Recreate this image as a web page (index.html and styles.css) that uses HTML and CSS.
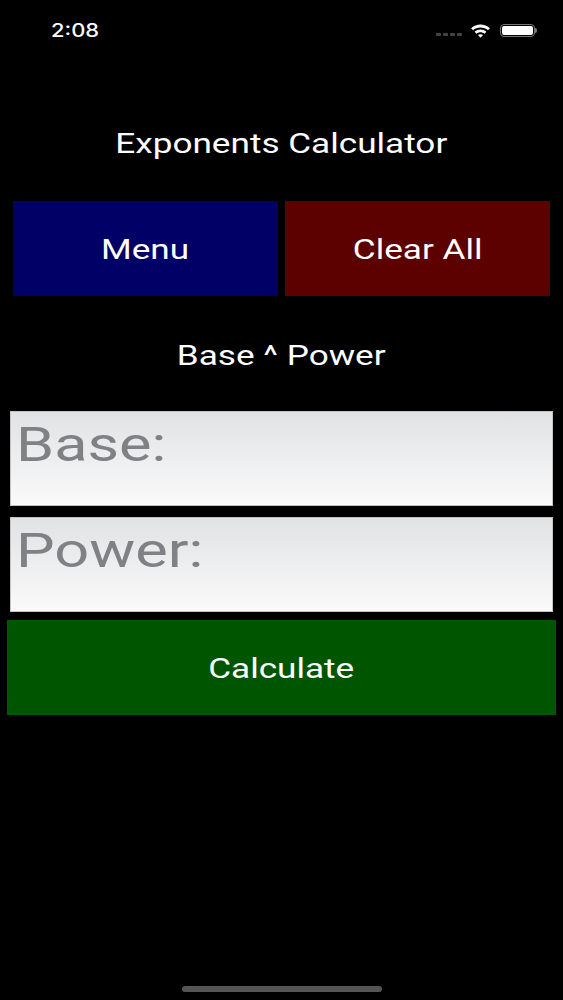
FILE: index.html
```html
<!DOCTYPE html>
<html lang="en">
<head>
    <meta charset="UTF-8">
    <meta name="viewport" content="width=device-width, initial-scale=1.0">
    <title>Exponents Calculator</title>
    <link rel="stylesheet" href="styles.css">
</head>
<body>
    <div class="status-bar">
        <span class="time">2:08</span>
        <div class="status-icons">
            <div class="signal">
                <span></span><span></span><span></span><span></span>
            </div>
            <svg class="wifi" width="23" height="15" viewBox="0 0 22 16">
                <path d="M1 5.6C6.6 0.4 15.4 0.4 21 5.6L19 7.7C14.500 3.700 7.500 3.700 3 7.700Z" fill="#fff"/>
                <path d="M4.700 9.300C8.300 6 13.700 6 17.300 9.300L15.300 11.400C12.700 9.200 9.300 9.200 6.700 11.400Z" fill="#fff"/>
                <path d="M8.300 12.900C9.900 11.700 12.100 11.700 13.700 12.900L11 15.700Z" fill="#fff"/>
            </svg>
            <div class="battery">
                <div class="battery-level"></div>
            </div>
            <div class="battery-cap"></div>
        </div>
    </div>

    <h1 class="title"><span class="stretch">Exponents Calculator</span></h1>

    <div class="top-buttons">
        <button type="button" class="btn btn-menu"><span class="stretch">Menu</span></button>
        <button type="button" class="btn btn-clear"><span class="stretch">Clear All</span></button>
    </div>

    <h2 class="subtitle"><span class="stretch">Base ^ Power</span></h2>

    <form class="calc-form">
        <div class="field"><span class="hint">Base:</span></div>
        <div class="field"><span class="hint">Power:</span></div>
        <button type="button" class="btn btn-calc"><span class="stretch">Calculate</span></button>
    </form>

    <div class="home-bar"></div>
</body>
</html>
```

FILE: styles.css
```css
html, body {
    height: 100%;
}
body {
    margin: 0;
    height: 1000px;
    overflow: hidden;
    background-color: #000;
    color: #fff;
    font-family: Roboto, 'Liberation Sans', sans-serif;
    display: flex;
    flex-direction: column;
}
.status-bar {
    height: 60px;
    padding: 0 26px 0 51px;
    display: flex;
    justify-content: space-between;
    align-items: center;
    box-sizing: border-box;
}
.time {
    display: inline-block;
    font-family: 'Inter', sans-serif;
    font-size: 18px;
    font-weight: 500;
    transform: scaleX(1.22);
    transform-origin: left center;
}
.status-icons {
    display: flex;
    align-items: center;
}
.signal {
    display: flex;
    gap: 2px;
    margin-top: 9px;
    margin-right: 7px;
}
.signal span {
    width: 5px;
    height: 3px;
    border-radius: 1px;
    background-color: #444;
}
.wifi {
    margin-right: 8px;
}
.battery {
    width: 31px;
    height: 9px;
    border: 1px solid #777;
    border-radius: 4px;
    padding: 1px;
    box-sizing: content-box;
    display: flex;
}
.battery-level {
    flex: 1;
    background-color: #fff;
    border-radius: 2px;
}
.battery-cap {
    width: 2px;
    height: 5px;
    background-color: #777;
    border-radius: 0 2px 2px 0;
}
.stretch {
    display: inline-block;
    transform: scaleX(1.255);
}
.title {
    margin: 65px 0 0;
    font-size: 28px;
    font-weight: 400;
    line-height: 38px;
    text-align: center;
}
.top-buttons {
    margin-top: 38px;
    padding: 0 13px;
    display: flex;
    gap: 7px;
}
.btn {
    border: none;
    color: #fff;
    font-family: inherit;
    font-size: 28px;
    padding: 2px 0 0;
    cursor: pointer;
}
.btn-menu, .btn-clear {
    flex: 1;
    height: 95px;
}
.btn-menu {
    background-color: #000066;
}
.btn-clear {
    background-color: #5c0000;
}
.subtitle {
    margin: 41px 0 0;
    font-size: 28px;
    font-weight: 400;
    line-height: 38px;
    text-align: center;
}
.calc-form {
    margin-top: 36px;
    padding: 0 7px;
    display: flex;
    flex-direction: column;
}
.field {
    margin: 0 3px 11px;
    height: 95px;
    padding: 3px 0 0 5px;
    box-sizing: border-box;
    border: 1px solid #c4c4c4;
    background: linear-gradient(#e1e2e3, #fafafb);
    font-size: 49px;
    line-height: 60px;
    color: #808184;
}
.hint {
    display: inline-block;
    transform: scaleX(1.25);
    transform-origin: left center;
}
.btn-calc {
    margin-top: -3px;
    height: 95px;
    background-color: #005600;
}
.home-bar {
    width: 200px;
    height: 6px;
    margin: 271px auto 0;
    border-radius: 3px;
    background-color: #555;
}
```
